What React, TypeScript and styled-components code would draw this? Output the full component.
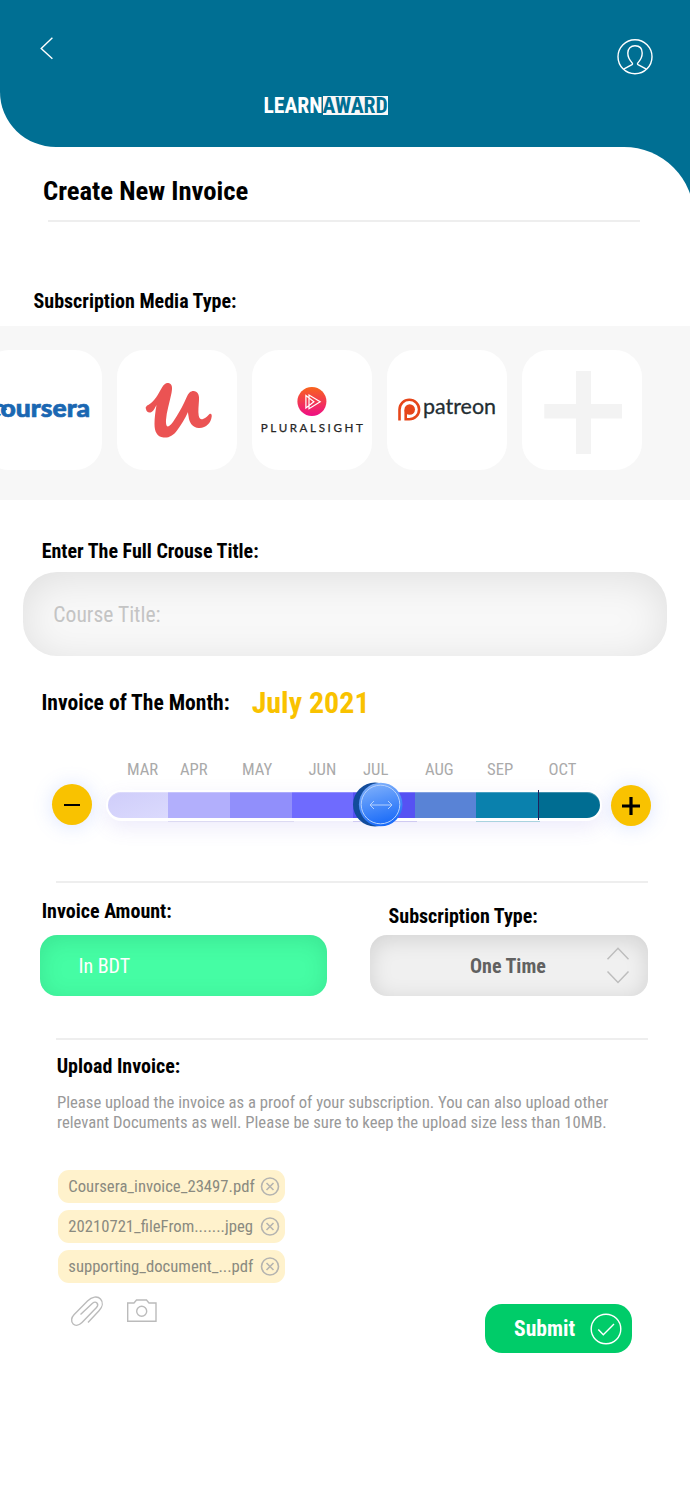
import React from "react";
import styled, { createGlobalStyle } from "styled-components";

const TEAL = "#006f93";

const Global = createGlobalStyle`
  * { box-sizing: border-box; }
  body { margin: 0; background: #fff; }
  button, input { font: inherit; border: 0; padding: 0; background: none; }
`;

const Page = styled.div`
  width: 690px;
  height: 1493px;
  overflow: hidden;
  background: #fff;
  font-family: "Roboto Condensed", Roboto, sans-serif;
  font-stretch: 75%;
  color: #000;
`;

const Header = styled.header`
  height: 147px;
  background: ${TEAL};
  border-bottom-left-radius: 56px 55px;
  display: flex;
  flex-direction: column;
`;

const HeaderBar = styled.div`
  display: flex;
  justify-content: space-between;
  height: 96px;
  padding: 37px 36px 0 40px;
`;

const Brand = styled.div`
  display: flex;
  margin-left: 263.5px;
  font-size: 21.6px;
  font-weight: 700;
  line-height: 20px;
  color: #fff;
`;

const BrandMark = styled.span`
  background: #f8f8f8;
  color: ${TEAL};
  height: 19px;
`;

const SheetBacking = styled.div`
  background: linear-gradient(90deg, #fff 50%, ${TEAL} 50%);
`;

const Sheet = styled.main`
  width: 694px;
  height: 1346px;
  background: #fff;
  border-top-right-radius: 70px;
  padding-top: 28px;
`;

const Title = styled.h1`
  margin: 0 0 13px 43px;
  font-size: 26.67px;
  font-weight: 700;
  line-height: 32px;
`;

const Divider = styled.div<{ $left: number }>`
  width: 592px;
  height: 2px;
  margin-left: ${(p) => p.$left}px;
  background: #eee;
`;

const Label = styled.div<{ $m: string; $size?: number }>`
  margin: ${(p) => p.$m};
  font-size: ${(p) => p.$size ?? 20}px;
  font-weight: 700;
  line-height: 24px;
  white-space: nowrap;
`;

const Strip = styled.div`
  height: 174px;
  width: 690px;
  background: #f7f7f7;
  padding-top: 24px;
  overflow: hidden;
`;

const Cards = styled.div`
  display: flex;
  gap: 15px;
  margin-left: -18.4px;
`;

const Card = styled.div`
  flex: none;
  width: 120px;
  height: 120px;
  border-radius: 27px;
  background: #fff;
  overflow: hidden;
`;

const CourseField = styled.div`
  width: 643.5px;
  height: 84px;
  margin-left: 23.3px;
  padding-left: 30px;
  border-radius: 34px;
  background: #f8f8f8;
  box-shadow: inset 0 6px 40px rgba(0, 0, 0, 0.1);
  font-size: 21.6px;
  line-height: 85px;
  color: #c4c4c4;
`;

const MonthHeading = styled.div`
  display: flex;
  align-items: center;
  height: 36px;
  margin: 29px 0 0 41.5px;
`;

const MonthValue = styled.span`
  margin-left: 22px;
  font-size: 30px;
  font-weight: 700;
  line-height: 36px;
  color: #f9c200;
`;

const Months = styled.div`
  display: flex;
  margin: 39px 0 0 127px;
  font-size: 16.67px;
  line-height: 20px;
  color: #aaa;
`;

const Month = styled.span<{ $w: number }>`
  width: ${(p) => p.$w}px;
`;

const SliderRow = styled.div`
  display: flex;
  align-items: flex-start;
  height: 101px;
  padding: 4px 0 0 52px;
`;

const RoundButton = styled.button<{ $drop?: number }>`
  width: 40px;
  height: 41px;
  margin-top: ${(p) => p.$drop ?? 0}px;
  border-radius: 50%;
  background: #f9c200;
  box-shadow: 0 1px 20px rgba(90, 130, 255, 0.22);
  display: flex;
  align-items: center;
  justify-content: center;
`;

const TrackWrap = styled.div`
  position: relative;
  width: 496px;
  height: 31px;
  margin: 6px 9px 0 14px;
`;

const Track = styled.div`
  display: flex;
  height: 31px;
  padding: 2px 2px 3px;
  border-radius: 16px;
  background: #fff;
  box-shadow: 0 7px 20px rgba(110, 90, 220, 0.12);
`;

const Segment = styled.div<{ $w: number; $c: string }>`
  width: ${(p) => p.$w}px;
  height: 26px;
  background: ${(p) => p.$c};
  box-shadow: inset 0 1px 0 rgba(255, 255, 255, 0.25);
  &:first-child { border-radius: 13px 0 0 13px; }
  &:last-child { border-radius: 0 13px 13px 0; }
`;

const Knob = styled.svg`
  position: absolute;
  left: 246px;
  top: -9px;
`;

const Tick = styled.div`
  position: absolute;
  left: 432px;
  top: 0;
  width: 1px;
  height: 30px;
  background: #20215c;
`;

const Underline = styled.div<{ $x: number; $w: number; $c: string }>`
  position: absolute;
  left: ${(p) => p.$x}px;
  top: 31px;
  width: ${(p) => p.$w}px;
  height: 1px;
  background: ${(p) => p.$c};
`;

const Columns = styled.div`
  display: flex;
  gap: 43px;
  height: 155px;
  margin-left: 40px;
`;

const Column = styled.div<{ $w: number }>`
  width: ${(p) => p.$w}px;
`;

const AmountField = styled.div`
  height: 61px;
  padding-left: 38.4px;
  border-radius: 17px;
  background: #45fda4;
  box-shadow: inset 0 4px 22px rgba(0, 90, 50, 0.15);
  font-size: 20px;
  line-height: 63px;
  color: #fff;
`;

const TypeField = styled.div`
  display: flex;
  align-items: center;
  justify-content: space-between;
  height: 61px;
  padding: 1px 18px 0 100px;
  border-radius: 17px;
  background: #f0f0f0;
  box-shadow: inset 0 4px 22px rgba(0, 0, 0, 0.13);
  font-size: 20px;
  font-weight: 700;
  color: #616161;
`;

const Hint = styled.p`
  margin: 15px 0 0 57px;
  font-size: 16.67px;
  line-height: 20px;
  color: #999;
  white-space: nowrap;
`;

const Files = styled.div`
  display: flex;
  flex-direction: column;
  gap: 7px;
  margin: 37px 0 0 58px;
`;

const FileChip = styled.div`
  display: flex;
  align-items: center;
  justify-content: space-between;
  width: 227px;
  height: 33px;
  padding: 0 5px 0 10.3px;
  border-radius: 11px;
  background: #fff2cc;
  font-size: 16.67px;
  line-height: 20px;
  color: #8a8a80;
  white-space: nowrap;
`;

const Actions = styled.div`
  display: flex;
  align-items: flex-start;
  justify-content: space-between;
  width: 632px;
  padding: 12px 0 0 69px;
`;

const Attach = styled.div`
  display: flex;
  gap: 20px;
`;

const Submit = styled.button`
  display: flex;
  align-items: center;
  justify-content: space-between;
  width: 147px;
  height: 49px;
  margin-top: 9px;
  padding: 0 10px 0 29px;
  border-radius: 17px;
  background: #00cc69;
  font-size: 21.6px;
  font-weight: 700;
  color: #fff;
`;

const months: [string, number][] = [
  ["MAR", 53], ["APR", 62], ["MAY", 66.5], ["JUN", 54.5],
  ["JUL", 62], ["AUG", 62], ["SEP", 61.5], ["OCT", 40],
];

const segments: [number, string][] = [
  [60, "linear-gradient(160deg, #cfcdfa, #dbdafd)"], [62, "#b2affc"], [62, "#918ffb"], [61, "#6f6bfe"],
  [62, "#5652f3"], [61, "#5983d6"], [62, "#0a81ad"], [62, "#006d92"],
];

const files = [
  "Coursera_invoice_23497.pdf",
  "20210721_fileFrom.......jpeg",
  "supporting_document_...pdf",
];

const BackIcon = () => (
  <svg width="14" height="23" viewBox="0 0 14 23" fill="none" stroke="#fff" strokeWidth="1.4">
    <path d="M12.4 0.8 1.2 11.4 12.4 21.8" />
  </svg>
);

const ProfileIcon = () => (
  <svg width="38" height="38" viewBox="0 0 38 38" fill="none" stroke="#fff" strokeWidth="1.4">
    <circle cx="19" cy="19.7" r="17" />
    <path d="M7.6 32.2 16 27.7c.9-.6.5-1.4-.3-2.3-2.1-2.4-3.9-5.1-3.9-9.4 0-4.7 3-7.2 7.2-7.2s7.2 2.5 7.2 7.2c0 4.3-1.8 7-3.9 9.4-.8.9-1.2 1.7-.3 2.3l8.4 4.5" />
  </svg>
);

const CourseraLogo = () => (
  <svg width="120" height="120" viewBox="0 0 120 120">
    <text x="6" y="66.8" textLength="102" lengthAdjust="spacingAndGlyphs" fontFamily="Lato" fontWeight="900" fontSize="25" fill="#1a67b2" stroke="#1a67b2" strokeWidth=".7" style={{ fontStretch: "100%" }}>coursera</text>
    <path d="M16 55.3c4-.8 5.500 1 8 5" fill="none" stroke="#1a67b2" strokeWidth="3" />
  </svg>
);

const UdemyLogo = () => (
  <svg width="120" height="120" viewBox="0 0 120 120">
    <path fill="#eb5353" d="M29 59c-1-2 1-3.5 3-4.5 6-4 9-10 13-17 2-3.5 4-5 6.5-4.500 4 .7 4 5 3 10-2 10-5 19-5.500 27-.2 3 .2 6 1.500 6.500 3 0 6-5.500 9-10 4-6.500 7-12 10-19 2-4.500 4-6.500 7-6.500 4 0 6 3.500 5.500 9-.3 6-1 11-.3 15.500.4 3 2 4.200 4.300 3.500 3-1 5-3.500 6.500-5 1.500-.8 2.500.5 2.200 2.500-.7 6.500-6 12-13 11.500-5.500-.3-9.500-4.500-10.200-12-.3-2-.5-3-.5-4-3 7-7 13-11 18.500-4 5.300-8 7.500-13.500 7-6.500-.7-9-6-9-13.500 0-6 .8-12 2-19-1.800 3-2.800 6.500-6 7.500-2.500.5-4.500-1.500-4.500-3.500z" />
  </svg>
);

const PluralsightLogo = () => (
  <svg width="120" height="120" viewBox="0 0 120 120">
    <defs>
      <linearGradient id="ps" x1="0" y1="0" x2="0" y2="1">
        <stop offset="0" stopColor="#f8641c" />
        <stop offset="1" stopColor="#ee0e86" />
      </linearGradient>
    </defs>
    <circle cx="59.9" cy="51.5" r="14.5" fill="url(#ps)" />
    <path d="M53.9 45.5v12.5l8-6.3zM57 45v13.7L68.2 51.7z" fill="none" stroke="#fff" strokeWidth="1.2" />
    <text x="8.800" y="82" textLength="102" lengthAdjust="spacing" fontFamily="Lato" fontWeight="400" fontSize="11.6" fill="#262626" stroke="#262626" strokeWidth=".25" style={{ fontStretch: "100%" }}>PLURALSIGHT</text>
  </svg>
);

const PatreonLogo = () => (
  <svg width="120" height="120" viewBox="0 0 120 120">
    <path d="M12.5 70.500V59.5a9.800 9.800 0 1 1 9.800 9.800H18.700V60" fill="none" stroke="#e6461a" strokeWidth="2.6" />
    <circle cx="22.7" cy="59.5" r="5.3" fill="#e6461a" />
    <text x="36" y="64" textLength="73" lengthAdjust="spacingAndGlyphs" fontFamily="Lato" fontSize="21.5" fill="#232d32" stroke="#232d32" strokeWidth=".3" style={{ fontStretch: "100%" }}>patreon</text>
  </svg>
);

const AddIcon = () => (
  <svg width="120" height="120" viewBox="0 0 120 120">
    <path d="M54 21h15v33h31v14.5H69V104H54V68.5H22.300V54H54z" fill="#f3f3f3" />
  </svg>
);

const UpDownIcon = () => (
  <svg width="24" height="38" viewBox="0 0 24 38" fill="none" stroke="#bdbdbd" strokeWidth="1.5">
    <path d="M1.5 12.200 12 1.300 22.5 12.200M1.5 24.500 12 35.500 22.5 24.500" />
  </svg>
);

const RemoveIcon = () => (
  <svg width="20" height="20" viewBox="0 0 20 20" fill="none" stroke="#b5b4b0" strokeWidth="1.6">
    <circle cx="10" cy="9.5" r="8.5" />
    <path d="m6.5 6 7 7m0-7-7 7" />
  </svg>
);

const ClipIcon = () => (
  <svg width="37" height="34" viewBox="0 0 37 34" fill="none" stroke="#bbb" strokeWidth="1.4">
    <path d="M11.5 19.5 23.5 8.3c3.5-3 7 1 4 4.2L13 27.5c-2.8 2.8-6.5 3.700-8.800 1.500-2.500-2.500-2-6.500 1-9.500L18.5 6C23 1.500 28.500.7 31.500 4c3 3.200 2 8-1.500 11.800L19 27.500" />
  </svg>
);

const CameraIcon = () => (
  <svg width="32" height="34" viewBox="0 0 32 34" fill="none" stroke="#bbb" strokeWidth="1.4">
    <path d="M1.7 8H8L10.5 5H20.5L23 8H30V26.2H1.7z" />
    <circle cx="15.7" cy="16.2" r="5" />
  </svg>
);

const CheckIcon = () => (
  <svg width="32" height="32" viewBox="0 0 32 32" fill="none" stroke="#fff" strokeWidth="1.4">
    <circle cx="16" cy="16" r="14.8" />
    <path d="m8.3 16.5 5 5.2L24 11" />
  </svg>
);

export default function App() {
  return (
    <Page>
      <Global />
      <Header>
        <HeaderBar>
          <BackIcon />
          <ProfileIcon />
        </HeaderBar>
        <Brand>
          LEARN<BrandMark>AWARD</BrandMark>
        </Brand>
      </Header>
      <SheetBacking>
        <Sheet>
          <Title>Create New Invoice</Title>
          <Divider $left={48} />
          <Label $m="67px 0 13px 33.5px">Subscription Media Type:</Label>
          <Strip>
            <Cards>
              <Card><CourseraLogo /></Card>
              <Card><UdemyLogo /></Card>
              <Card><PluralsightLogo /></Card>
              <Card><PatreonLogo /></Card>
              <Card><AddIcon /></Card>
            </Cards>
          </Strip>
          <Label $m="39px 0 9px 41.7px">Enter The Full Crouse Title:</Label>
          <CourseField>Course Title:</CourseField>
          <MonthHeading>
            <Label $m="0" $size={21.6}>Invoice of The Month:</Label>
            <MonthValue>July 2021</MonthValue>
          </MonthHeading>
          <Months>
            {months.map(([name, w]) => <Month key={name} $w={w}>{name}</Month>)}
          </Months>
          <SliderRow>
            <RoundButton>
              <svg width="16" height="2"><path d="M0 1h16" stroke="#000" strokeWidth="2" /></svg>
            </RoundButton>
            <TrackWrap>
              <Track>
                {segments.map(([w, c]) => <Segment key={c} $w={w} $c={c} />)}
              </Track>
              <Underline $x={62} $w={126} $c="#dcdaf3" />
              <Underline $x={247} $w={64} $c="#cfcaf2" />
              <Underline $x={370} $w={64} $c="#a9d3df" />
              <Tick />
              <Knob width="52" height="48" viewBox="0 0 52 48">
                <defs>
                  <linearGradient id="kn" x1=".35" y1="0" x2=".6" y2="1">
                    <stop offset="0" stopColor="#7fb0fb" />
                    <stop offset="1" stopColor="#1568f8" />
                  </linearGradient>
                </defs>
                <circle cx="23" cy="23.5" r="22" fill="#124c9c" />
                <circle cx="28.7" cy="23.5" r="21.8" fill="url(#kn)" />
                <circle cx="28.5" cy="23.5" r="19.3" fill="none" stroke="#b5d0fc" strokeWidth="1" />
                <path d="M18 24h22M22 20l-4 4 4 4M36 20l4 4-4 4" fill="none" stroke="#b5d0fc" strokeWidth="1" />
              </Knob>
            </TrackWrap>
            <RoundButton $drop={1}>
              <svg width="18" height="18"><path d="M0 9h18M9 0v18" stroke="#000" strokeWidth="3.2" /></svg>
            </RoundButton>
          </SliderRow>
          <Divider $left={56} />
          <Columns>
            <Column $w={287}>
              <Label $m="16px 0 12px 1.7px">Invoice Amount:</Label>
              <AmountField>In BDT</AmountField>
            </Column>
            <Column $w={278}>
              <Label $m="21px 0 7px 18.5px">Subscription Type:</Label>
              <TypeField>One Time<UpDownIcon /></TypeField>
            </Column>
          </Columns>
          <Divider $left={56} />
          <Label $m="14px 0 0 56.7px">Upload Invoice:</Label>
          <Hint>
            Please upload the invoice as a proof of your subscription. You can also upload other
            <br />
            relevant Documents as well. Please be sure to keep the upload size less than 10MB.
          </Hint>
          <Files>
            {files.map((f) => <FileChip key={f}>{f}<RemoveIcon /></FileChip>)}
          </Files>
          <Actions>
            <Attach>
              <ClipIcon />
              <CameraIcon />
            </Attach>
            <Submit>Submit<CheckIcon /></Submit>
          </Actions>
        </Sheet>
      </SheetBacking>
    </Page>
  );
}
